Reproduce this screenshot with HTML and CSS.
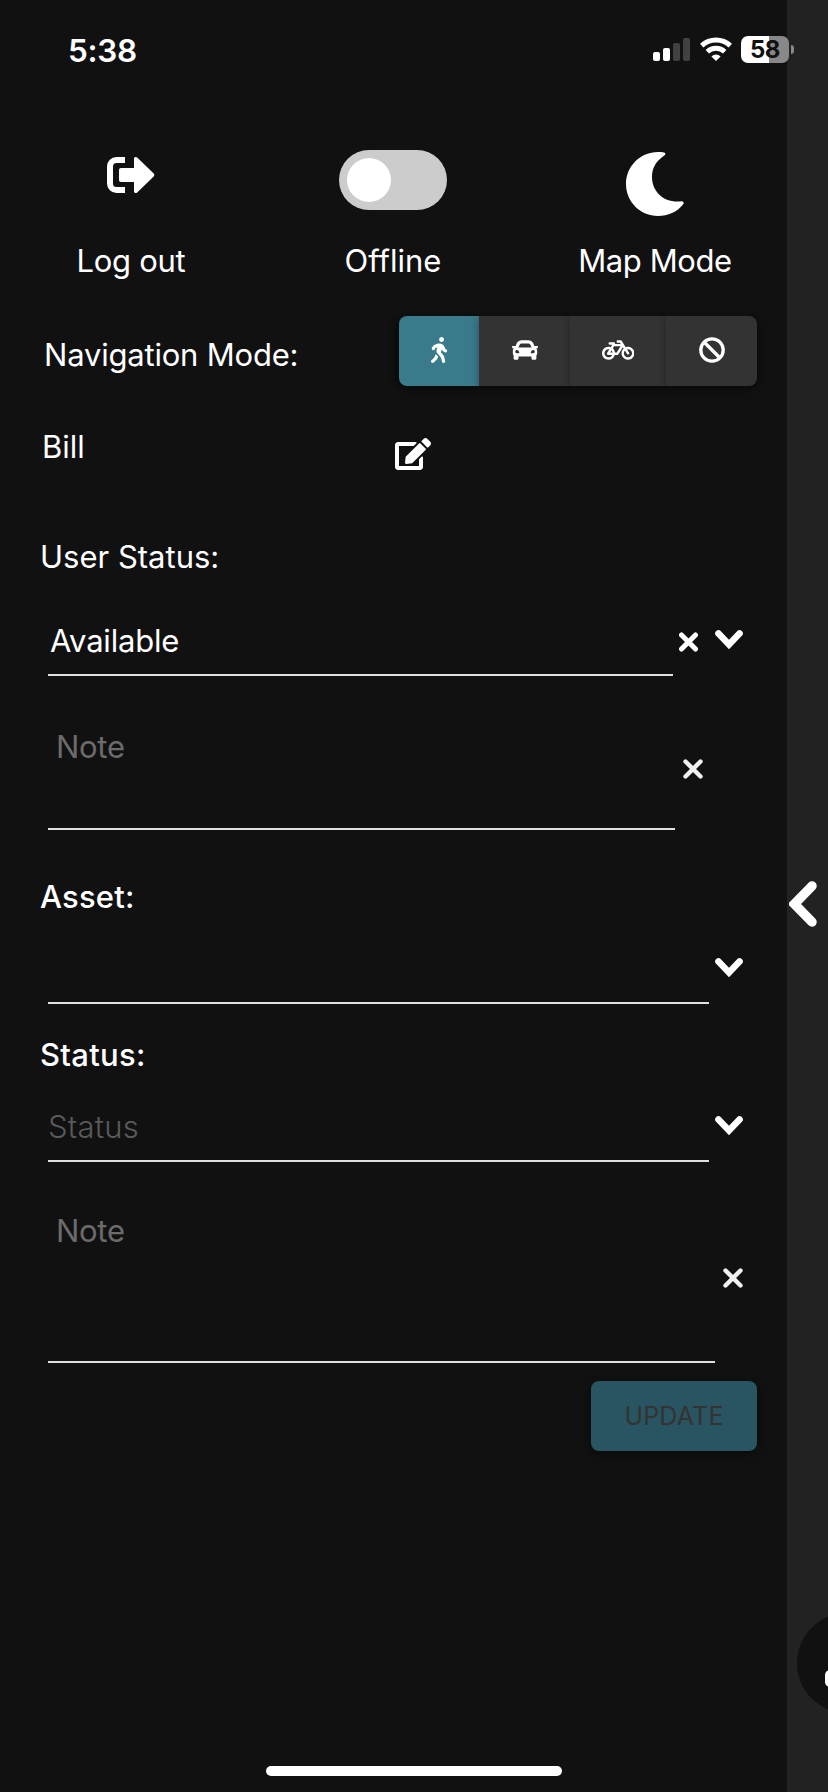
FILE: index.html
```html
<!DOCTYPE html>
<html lang="en">
<head>
<meta charset="utf-8">
<title>Settings</title>
<link rel="stylesheet" href="styles.css">
</head>
<body>
<div class="screen">
  <header class="statusbar">
    <span class="time">5:38</span>
    <div class="indicators">
      <svg class="signal" viewBox="0 0 37 23"><rect y="14" width="7" height="9" rx="2" fill="#fff"/><rect x="10" y="10" width="7" height="13" rx="2" fill="#fff"/><rect x="20" y="5" width="7" height="18" rx="2" fill="#414141"/><rect x="30" width="7" height="23" rx="2" fill="#414141"/></svg>
      <svg class="wifi" viewBox="0 0 32 24"><g fill="none" stroke="#fff"><path d="M1.700 8.600A21 21 0 0 1 30.300 8.600" stroke-width="5"/><path d="M7.300 14.700A12.700 12.700 0 0 1 24.700 14.700" stroke-width="4.800"/></g><path d="M16 24l-4.600-4.600a6.600 6.600 0 0 1 9.200 0z" fill="#fff"/></svg>
      <div class="battery"><span class="level">58</span><i class="cap"></i></div>
    </div>
  </header>
  <main class="panel">
    <section class="actions">
      <div class="action">
        <div class="action-icon"><svg class="logout" viewBox="0 0 48 36"><path d="M18 3H9.500a6.500 6.500 0 0 0-6.500 6.500v17a6.500 6.500 0 0 0 6.500 6.500H18" fill="none" stroke="#fff" stroke-width="6"/><path d="M14 11h13V1.500c0-1.500 2-2 3.200-.9L46.700 16.500c.8.8.8 2.200 0 3L30.200 35.400c-1.200 1.100-3.200.6-3.200-.9V25H14c-1.200 0-2-.8-2-2V13c0-1.200.8-2 2-2z" fill="#fff"/></svg></div>
        <span class="label logout-label">Log out</span>
      </div>
      <div class="action">
        <div class="action-icon"><div class="toggle"><i class="knob"></i></div></div>
        <span class="label offline-label">Offline</span>
      </div>
      <div class="action">
        <div class="action-icon"><svg class="moon" viewBox="0 0 58 64"><path d="M32 0c2 0 4 .1 6 .5 1.800.3 1.700 2 .3 3C30 9 26 16 26 25c0 15 12.500 26.500 29.500 24.300 1.800-.2 2.800 1.400 1.700 2.900C51 60 42 64 32 64 14.300 64 0 49.700 0 32S14.300 0 32 0z" fill="#fff"/></svg></div>
        <span class="label map-label">Map Mode</span>
      </div>
    </section>

    <section class="navrow">
      <span class="label nav-label">Navigation Mode:</span>
      <div class="modes">
        <button class="mode walk active"><svg viewBox="0 0 320 512"><path d="M208 96c26.500 0 48-21.500 48-48S234.500 0 208 0s-48 21.500-48 48 21.500 48 48 48zm94.500 149.100l-23.300-11.800-9.700-29.400c-14.700-44.600-55.700-75.800-102.200-75.900-36-.1-55.900 10.100-93.300 25.200-21.600 8.700-39.300 25.200-49.700 46.200L17.600 213c-7.800 15.800-1.500 35 14.200 42.900 15.600 7.900 34.600 1.500 42.500-14.300L81 228c3.500-7 9.300-12.500 16.500-15.400l26.800-10.800-15.200 60.700c-5.200 20.800.4 42.900 14.900 58.800l59.900 65.400c7.200 7.900 12.300 17.400 14.900 27.700l18.300 73.300c4.300 17.100 21.700 27.600 38.800 23.300 17.100-4.300 27.600-21.700 23.300-38.800l-22.200-89c-2.600-10.300-7.700-19.900-14.900-27.700l-45.500-49.700 17.200-68.700 5.500 16.500c5.300 16.100 16.700 29.400 31.700 37l23.300 11.800c15.600 7.900 34.600 1.500 42.500-14.300 7.700-15.700 1.400-35.100-14.300-43zM73.600 385.800c-3.200 8.100-8 15.400-14.200 21.500l-50 50.100c-12.500 12.500-12.500 32.800 0 45.300s32.700 12.500 45.200 0l59.400-59.400c6.100-6.100 10.900-13.400 14.200-21.500l13.500-33.800c-55.300-60.300-38.700-41.800-47.400-53.700l-20.700 51.500z"/></svg></button>
        <button class="mode car"><svg viewBox="0 0 512 512"><path d="M499.990 176h-59.870l-16.640-41.600C406.380 91.630 365.570 64 319.500 64h-127c-46.060 0-86.880 27.630-103.990 70.400L71.870 176H12.010C4.200 176-1.530 183.340.37 190.910l6 24C7.700 220.250 12.500 224 18.010 224h20.070C24.650 235.730 16 252.780 16 272v48c0 16.120 6.160 30.670 16 41.930V416c0 17.670 14.330 32 32 32h32c17.670 0 32-14.330 32-32v-32h256v32c0 17.670 14.330 32 32 32h32c17.670 0 32-14.330 32-32v-54.070c9.840-11.250 16-25.800 16-41.930v-48c0-19.220-8.650-36.270-22.070-48H494c5.510 0 10.310-3.750 11.640-9.090l6-24c1.890-7.570-3.840-14.910-11.650-14.910zm-352.060-17.830c7.290-18.220 24.940-30.170 44.570-30.170h127c19.630 0 37.280 11.950 44.570 30.170L384 208H128l19.930-49.830zM96 319.800c-19.200 0-32-12.760-32-31.900S76.800 256 96 256s48 28.710 48 47.850-28.800 15.950-48 15.950zm320 0c-19.200 0-48 3.190-48-15.950S396.800 256 416 256s32 12.760 32 31.900-12.800 31.900-32 31.900z"/></svg></button>
        <button class="mode bike"><svg viewBox="0 0 640 512"><path d="M512.509 192.001c-16.373-.064-32.030 2.955-46.436 8.495l-77.680-125.153A24 24 0 0 0 368.001 64h-64c-8.837 0-16 7.163-16 16v16c0 8.837 7.163 16 16 16h50.649l14.896 24H256.002v-16c0-8.837-7.163-16-16-16h-87.459c-13.441 0-24.777 10.999-24.536 24.437.232 13.044 10.876 23.563 23.995 23.563h48.726l-29.417 47.520c-13.433-4.830-27.904-7.483-42.992-7.520C58.094 191.830.412 249.012.002 319.236-.413 390.279 57.055 448 128.002 448c59.642 0 109.758-40.793 123.967-96h52.033a24 24 0 0 0 20.406-11.367L410.370 201.770l14.938 24.067c-25.455 23.448-41.385 57.081-41.307 94.437.145 68.833 57.899 127.051 126.729 127.719 70.606.685 128.181-55.803 129.255-125.996 1.086-70.941-56.526-129.720-127.476-129.996zM186.750 265.772c9.727 10.529 16.673 23.661 19.642 38.228h-43.306l23.664-38.228zM128.002 400c-44.112 0-80-35.888-80-80s35.888-80 80-80c5.869 0 11.586.653 17.099 1.859l-45.505 73.509C89.715 331.327 101.213 352 120.002 352h81.300c-12.370 28.225-40.562 48-73.300 48zm162.630-96h-35.624c-3.960-31.756-19.556-59.894-42.383-80.026L237.371 184h127.547l-74.286 120zm217.057 95.886c-41.036-2.165-74.049-35.692-75.627-76.755-.812-21.121 6.633-40.518 19.335-55.263l44.433 71.586c4.660 7.508 14.524 9.816 22.032 5.156l13.594-8.437c7.508-4.660 9.817-14.524 5.156-22.032l-44.468-71.643a79.901 79.901 0 0 1 19.858-2.497c44.112 0 80 35.888 80 80-.001 45.540-38.252 82.316-84.313 79.885z"/></svg></button>
        <button class="mode none"><svg viewBox="0 0 26 26"><g fill="none" stroke="#fff" stroke-width="3.300"><circle cx="13" cy="13" r="11.200"/><path d="M5 5l16 16"/></g></svg></button>
      </div>
    </section>

    <section class="userrow">
      <span class="label bill">Bill</span>
      <svg class="edit" viewBox="0 0 576 512"><path fill="#fff" d="M402.600 83.200l90.200 90.200c3.800 3.800 3.800 10 0 13.800L274.400 405.600l-92.800 10.300c-12.400 1.400-22.900-9.100-21.500-21.500l10.300-92.800L388.800 83.200c3.800-3.800 10-3.800 13.800 0zm162-22.900l-48.800-48.800c-15.200-15.200-39.900-15.200-55.200 0l-35.400 35.400c-3.800 3.800-3.800 10 0 13.800l90.200 90.200c3.800 3.800 10 3.800 13.800 0l35.400-35.400c15.200-15.300 15.200-40 0-55.200zM384 346.200V448H64V128h229.800c3.200 0 6.200-1.300 8.500-3.500l40-40c7.600-7.600 2.200-20.500-8.500-20.500H48C21.500 64 0 85.500 0 112v352c0 26.500 21.500 48 48 48h352c26.500 0 48-21.500 48-48V306.200c0-10.700-12.900-16-20.500-8.500l-40 40c-2.200 2.300-3.500 5.300-3.500 8.500z"/></svg>
    </section>

    <h2 class="label heading user-heading">User Status:</h2>
    <div class="row user-select">
      <div class="field"><span class="label available">Available</span></div>
      <svg class="clear-bold" viewBox="0 0 19 20"><path d="M2.500 3l14 14M16.500 3l-14 14" stroke="#fff" stroke-width="5" stroke-linecap="round"/></svg>
      <svg class="chev" viewBox="0 0 28 20"><path d="M3.500 3.500L14 14.500 24.500 3.500" fill="none" stroke="#fff" stroke-width="6.600" stroke-linecap="round"/></svg>
    </div>
    <div class="row user-note">
      <div class="field"><span class="label note">Note</span></div>
      <svg class="clear" viewBox="0 0 20 20"><path d="M2.500 2.500l15 15M17.500 2.500l-15 15" stroke="#f1efef" stroke-width="4.400" stroke-linecap="round"/></svg>
    </div>

    <h2 class="label heading asset-heading">Asset:</h2>
    <div class="row asset-select">
      <div class="field"></div>
      <svg class="chev" viewBox="0 0 28 20"><path d="M3.500 3.500L14 14.500 24.500 3.500" fill="none" stroke="#fff" stroke-width="6.600" stroke-linecap="round"/></svg>
    </div>

    <h2 class="label heading status-heading">Status:</h2>
    <div class="row status-select">
      <div class="field"><span class="label status-hint">Status</span></div>
      <svg class="chev" viewBox="0 0 28 20"><path d="M3.500 3.500L14 14.500 24.500 3.500" fill="none" stroke="#fff" stroke-width="6.600" stroke-linecap="round"/></svg>
    </div>
    <div class="row status-note">
      <div class="field"><span class="label note">Note</span></div>
      <svg class="clear" viewBox="0 0 20 20"><path d="M2.500 2.500l15 15M17.500 2.500l-15 15" stroke="#f1efef" stroke-width="4.400" stroke-linecap="round"/></svg>
    </div>
    <button class="update"><span>UPDATE</span></button>
  </main>
  <aside class="rail">
    <svg class="back" viewBox="0 0 28 46"><path d="M23 5L5.500 23 23 41" fill="none" stroke="#fff" stroke-width="9.500" stroke-linecap="round"/></svg>
    <div class="fab"><i class="fab-glyph"></i></div>
  </aside>
  <div class="home"></div>
</div>
</body>
</html>
```
FILE: styles.css
```css
* { box-sizing: border-box; }
body { margin: 0; background: #111; }
svg { display: block; flex: none; }
.screen { position: relative; display: flex; width: 828px; height: 1792px; overflow: hidden; background: #111; color: #fff; font-family: Inter, "Liberation Sans", sans-serif; font-size: 31px; line-height: 40px; }

/* Status bar overlays both the panel and the rail */
.statusbar { position: absolute; z-index: 2; top: 0; left: 0; width: 100%; height: 100px; padding: 30px 34px 0 68px; display: flex; justify-content: space-between; align-items: flex-start; }
.time { font-weight: 600; font-size: 31.5px; letter-spacing: -0.3px; padding-top: 1px; }
.indicators { display: flex; align-items: flex-start; padding-top: 6px; }
.signal { width: 37px; height: 23px; margin: 2px 10px 0 0; }
.wifi { width: 32px; height: 24px; margin: 1px 9px 0 0; }
.battery { display: flex; align-items: center; gap: 2px; }
.level { width: 48px; height: 27px; border-radius: 7px; background: linear-gradient(90deg, #fff 28px, #888 28px); color: #111; font-size: 24px; font-weight: 700; line-height: 28px; text-align: center; letter-spacing: -0.5px; }
.cap { width: 3px; height: 9px; border-radius: 0 4px 4px 0; background: #888; }

.panel { width: 787px; display: flex; flex-direction: column; padding-top: 150px; }
.label { display: block; font-size: 31px; font-weight: 400; line-height: 40px; white-space: nowrap; }

.actions { display: grid; grid-template-columns: repeat(3, 262px); height: 166px; }
.action { display: flex; flex-direction: column; align-items: center; }
.action-icon { height: 91px; }
.logout { width: 48px; height: 36px; margin-top: 7px; }
.logout-label { letter-spacing: -0.3px; }
.map-label { letter-spacing: -0.4px; }
.moon { width: 58px; height: 64px; margin-top: 2px; }
.toggle { width: 108px; height: 60px; border-radius: 30px; background: #ccc; padding: 8px; }
.knob { display: block; width: 44px; height: 44px; border-radius: 50%; background: #fff; }

.navrow { display: flex; justify-content: space-between; align-items: flex-start; height: 111px; padding: 0 30px 0 44px; }
.nav-label { margin-top: 19px; letter-spacing: -0.2px; }
.modes { display: flex; width: 358px; height: 70px; border-radius: 8px; box-shadow: 0 2px 8px rgba(0,0,0,.55); }
.mode { display: flex; align-items: center; justify-content: center; height: 70px; padding: 0 0 2px; border: 0; background: #333; box-shadow: 0 2px 8px rgba(0,0,0,.35); clip-path: inset(0 0 0 -8px); }
.mode svg { height: 26px; fill: #fff; }
.walk { width: 80px; background: #397a8b; border-radius: 8px 0 0 8px; }
.car { width: 91px; }
.bike { width: 96px; }
.none { width: 91px; border-radius: 0 8px 8px 0; }

.userrow { display: grid; grid-template-columns: 353px 36px; align-items: start; height: 110px; padding-left: 42px; }
.edit { width: 36px; height: 32px; margin-top: 11px; }

.heading { margin: 0; padding-left: 40px; }
.user-heading { height: 84px; }
.row { display: flex; align-items: flex-start; padding-left: 48px; }
.field { flex: none; border-bottom: 2px solid #e0e0e0; }
.user-select { height: 55px; }
.user-select .field { width: 625px; height: 55px; }
.available { padding-left: 2px; letter-spacing: -0.2px; }
.clear-bold { width: 19px; height: 20px; margin: 11px 0 0 6px; }
.chev { width: 28px; height: 20px; }
.user-select .chev { margin: 9px 0 0 17px; }
.user-note { height: 154px; }
.user-note .field { width: 627px; height: 154px; padding-top: 51px; }
.note { padding-left: 8px; color: #6b6b6b; letter-spacing: -0.3px; }
.clear { width: 20px; height: 20px; }
.user-note .clear { margin: 83px 0 0 8px; }
.asset-heading { margin-top: 47px; height: 75px; font-weight: 500; letter-spacing: 0.2px; }
.asset-select .field { width: 661px; height: 52px; }
.asset-select .chev { margin: 6px 0 0 6px; }
.status-heading { margin-top: 31px; height: 71px; font-weight: 500; letter-spacing: 0.3px; }
.status-select .field { width: 661px; height: 56px; padding-top: 1px; }
.status-select .chev { margin: 10px 0 0 6px; }
.status-hint { color: #5a5a5a; font-weight: 300; letter-spacing: 0.25px; }
.status-note .field { width: 667px; height: 201px; padding-top: 49px; }
.status-note .clear { margin: 106px 0 0 8px; }
.update { align-self: flex-end; width: 166px; height: 70px; margin: 18px 30px 0 0; padding: 0; border: 0; border-radius: 8px; background: #295462; color: #333; box-shadow: 0 2px 8px rgba(0,0,0,.5); font-family: inherit; font-size: 25px; font-weight: 400; line-height: 70px; letter-spacing: 0.2px; }

.rail { width: 41px; flex: none; background: #222; display: flex; flex-direction: column; align-items: flex-start; padding-top: 881px; overflow: hidden; }
.back { width: 28px; height: 46px; margin-left: 2px; }
.fab { flex: none; width: 100px; height: 100px; border-radius: 50%; background: #111; margin: 686px 0 0 10px; padding: 57px 0 0 28px; }
.fab-glyph { display: block; width: 30px; height: 17px; border-radius: 5px; background: #fff; }

.home { position: absolute; left: 266px; top: 1766px; width: 296px; height: 10px; border-radius: 5px; background: #fff; }
```
